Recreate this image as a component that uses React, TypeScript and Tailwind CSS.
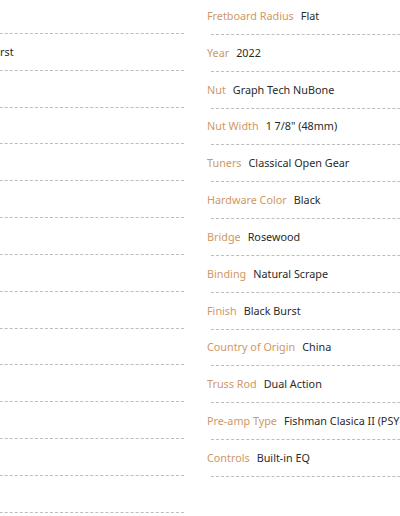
import React from "react";

const right: [string, string][] = [
  ["Fretboard Radius", "Flat"],
  ["Year", "2022"],
  ["Nut", "Graph Tech NuBone"],
  ["Nut Width", "1 7/8\" (48mm)"],
  ["Tuners", "Classical Open Gear"],
  ["Hardware Color", "Black"],
  ["Bridge", "Rosewood"],
  ["Binding", "Natural Scrape"],
  ["Finish", "Black Burst"],
  ["Country of Origin", "China"],
  ["Truss Rod", "Dual Action"],
  ["Pre-amp Type", "Fishman Clasica II (PSY-301)"],
  ["Controls", "Built-in EQ"],
];

const left: [string, string][] = [
  ["Body", "CE"],
  ["Finish", "Black Burst"],
  ["Top", "Spruce"],
  ["Back", "Sapele"],
  ["Sides", "Sapele"],
  ["Neck", "Nato"],
  ["Scale", "650mm"],
  ["Frets", "19"],
  ["Body", "Nylon"],
  ["Top", "Solid"],
  ["Shape", "Cut"],
  ["Wood", "Maple"],
  ["Strings", "6"],
  ["Case", "No"],
];

function Row({ label, value }: { label: string; value: string }) {
  return (
    <li className="h-[36.83px] flex flex-col">
      <div className="pt-[6px] h-[26px] leading-[20px] whitespace-nowrap text-[10.8px]">
        <span className="text-[#cf9866]">{label}</span>
        <span className="ml-[7px] text-[#2a2a2a]">{value}</span>
      </div>
      <div className="mt-[8px] ml-[4px] border-t border-dashed border-[#bdbdbd]" />
    </li>
  );
}

export default function App() {
  return (
    <div
      className="w-[400px] h-[516px] overflow-hidden bg-white"
      style={{ fontFamily: '"Noto Sans", "Open Sans", sans-serif' }}
    >
      <div className="flex gap-[23px] -ml-[80px]">
        <ul className="w-[264px] shrink-0 -mt-px">
          {left.map(([l, v], i) => (
            <Row key={i} label={l} value={v} />
          ))}
        </ul>
        <ul className="w-[264px] shrink-0">
          {right.map(([l, v], i) => (
            <Row key={i} label={l} value={v} />
          ))}
        </ul>
      </div>
    </div>
  );
}
